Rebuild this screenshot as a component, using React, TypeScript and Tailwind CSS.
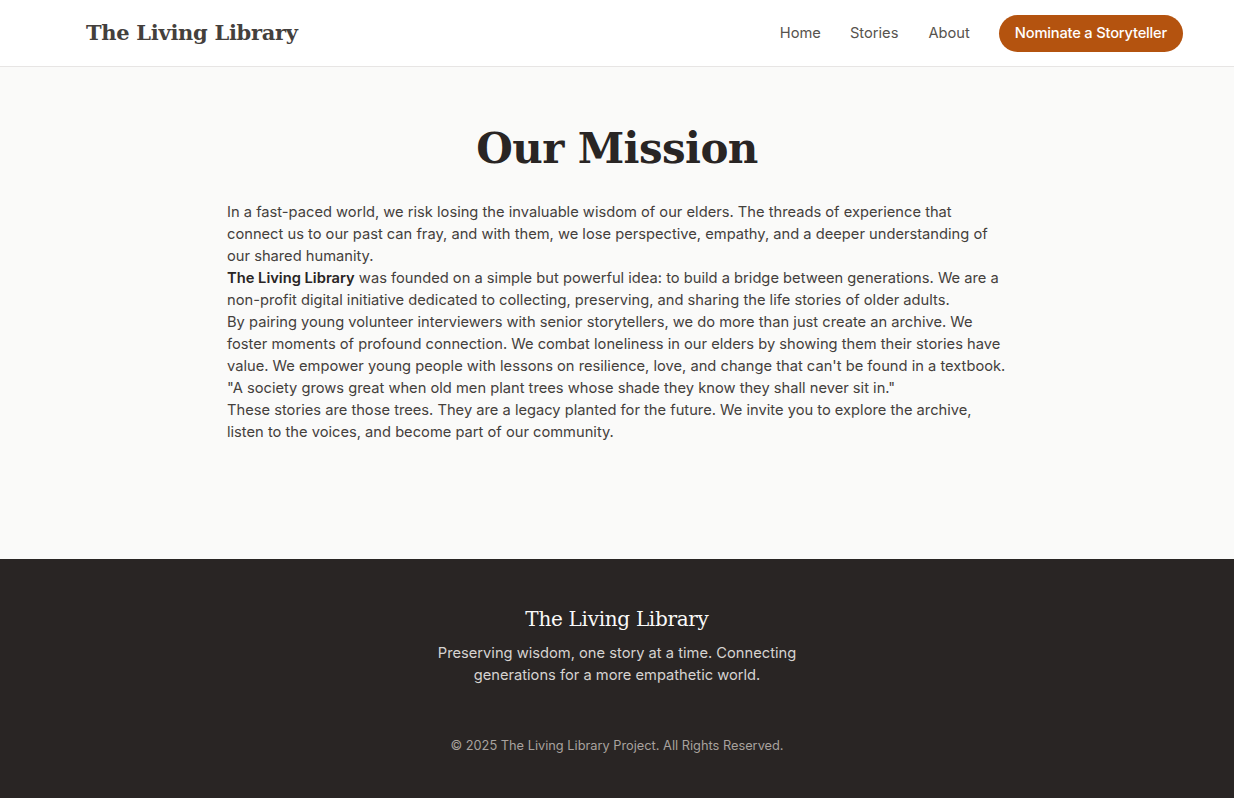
const serif = "font-['DejaVu_Serif',Georgia,serif]";

const Header = () => (
  <header className="h-[67px] bg-white border-b border-[#e7e5e4] flex items-center justify-between pl-[86px] pr-[51px]">
    <a className={`${serif} font-bold text-[21px] text-[#44403c] tracking-[-0.3px]`}>
      The Living Library
    </a>
    <nav className="flex items-center text-[14.7px] text-[#57534e] pt-[1px]">
      <a>Home</a>
      <a className="ml-[29px]">Stories</a>
      <a className="ml-[30px]">About</a>
      <button className="ml-[29px] h-[37px] px-[16px] rounded-full bg-[#b4530f] text-white font-medium tracking-[-0.2px]">
        Nominate a Storyteller
      </button>
    </nav>
  </header>
);

const Mission = () => (
  <main className="bg-[#fafaf9] h-[492px] pt-[55px]">
    <h1 className={`${serif} text-center font-bold text-[42px] leading-[54px] text-[#292524] tracking-[-0.6px]`}>
      Our Mission
    </h1>
    <div className="mx-auto w-[780px] mt-[25px] text-[14.7px] leading-[22px] text-[#44403c]">
      <p>
        In a fast-paced world, we risk losing the invaluable wisdom of our
        elders. The threads of experience that connect us to our past can fray,
        and with them, we lose perspective, empathy, and a deeper understanding
        of our shared humanity.
      </p>
      <p>
        <strong className="font-semibold text-[#292524]">The Living Library</strong>{" "}
        was founded on a simple but powerful idea: to build a bridge between
        generations. We are a non-profit digital initiative dedicated to
        collecting, preserving, and sharing the life stories of older adults.
      </p>
      <p>
        By pairing young volunteer interviewers with senior storytellers, we do
        more than just create an archive. We foster moments of profound
        connection. We combat loneliness in our elders by showing them their
        stories have value. We empower young people with lessons on resilience,
        love, and change that can't be found in a textbook.
      </p>
      <p>
        "A society grows great when old men plant trees whose shade they know
        they shall never sit in."
      </p>
      <p>
        These stories are those trees. They are a legacy planted for the
        future. We invite you to explore the archive, listen to the voices, and
        become part of our community.
      </p>
    </div>
  </main>
);

const Footer = () => (
  <footer className="bg-[#292524] h-[239px] flex flex-col items-center pt-[46px]">
    <h2 className={`${serif} text-[20px] leading-[28px] text-[#fafaf9] tracking-[-0.3px]`}>
      The Living Library
    </h2>
    <p className="mt-[9px] w-[370px] text-center text-[14.7px] leading-[22px] text-[#d6d3d1]">
      Preserving wisdom, one story at a time. Connecting generations for a more
      empathetic world.
    </p>
    <p className="mt-[50px] text-[12.8px] text-[#a8a29e]">
      © 2025 The Living Library Project. All Rights Reserved.
    </p>
  </footer>
);

export default function App() {
  return (
    <div className="min-h-screen font-['Inter',sans-serif]">
      <Header />
      <Mission />
      <Footer />
    </div>
  );
}
